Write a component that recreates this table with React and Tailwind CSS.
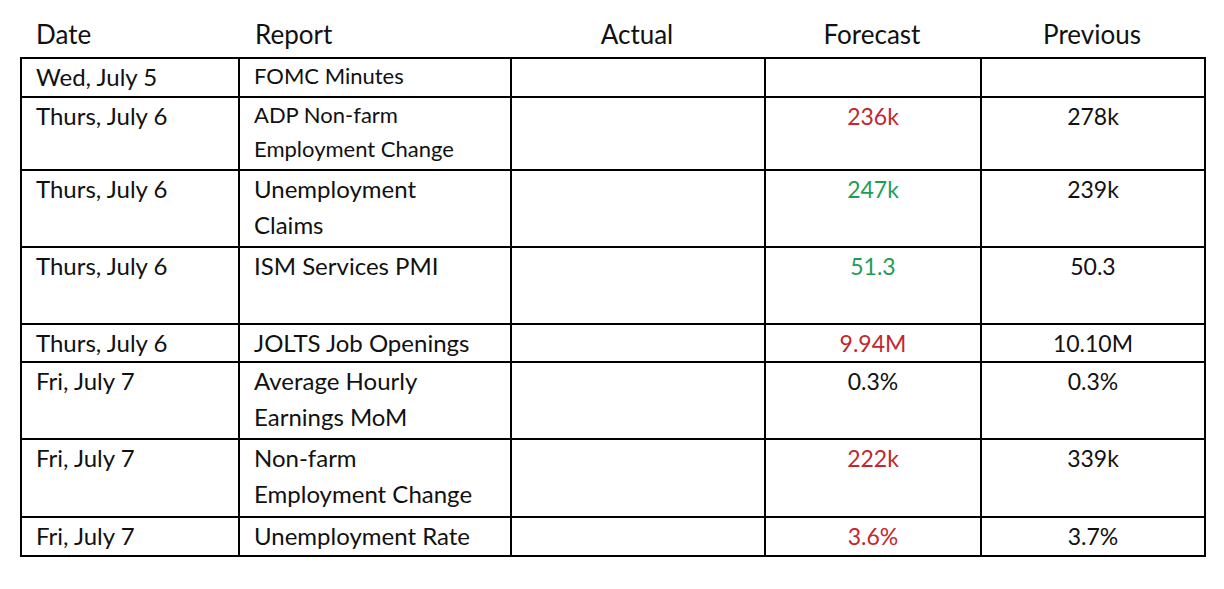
const rows = [
  { date: 'Wed, July 5', report: ['FOMC Minutes'], small: true },
  { date: 'Thurs, July 6', report: ['ADP Non-farm', 'Employment Change'], small: true, forecast: '236k', tone: 'red', previous: '278k' },
  { date: 'Thurs, July 6', report: ['Unemployment', 'Claims'], forecast: '247k', tone: 'green', previous: '239k' },
  { date: 'Thurs, July 6', report: ['ISM Services PMI'], forecast: '51.3', tone: 'green', previous: '50.3' },
  { date: 'Thurs, July 6', report: ['JOLTS Job Openings'], forecast: '9.94M', tone: 'red', previous: '10.10M' },
  { date: 'Fri, July 7', report: ['Average Hourly', 'Earnings MoM'], forecast: '0.3%', previous: '0.3%' },
  { date: 'Fri, July 7', report: ['Non-farm', 'Employment Change'], forecast: '222k', tone: 'red', previous: '339k' },
  { date: 'Fri, July 7', report: ['Unemployment Rate'], forecast: '3.6%', tone: 'red', previous: '3.7%' },
];

const toneClass = {
  red: 'text-[#c3262c]',
  green: 'text-[#1f9d57]',
};

export default function App() {
  return (
    <div
      className="w-[1224px] h-[589px] bg-white text-[#111] overflow-hidden"
      style={{ fontFamily: 'Lato, "Open Sans", sans-serif' }}
    >
      {/* Заголовки колонок */}
      <div className="ml-[22px] h-[57px] pt-[16px] grid grid-cols-[216px_272px_254px_216px_224px] text-[26px] leading-[36px]">
        <div className="pl-[14px]">Date</div>
        <div className="pl-[17px]">Report</div>
        <div className="text-center">Actual</div>
        <div className="text-center">Forecast</div>
        <div className="text-center">Previous</div>
      </div>

      {/* Таблица */}
      <div className="ml-[20px] w-[1186px] border-2 border-black bg-black grid gap-[2px] grid-cols-[216px_270px_252px_214px_222px] grid-rows-[37px_71px_75px_75px_36px_75px_76px_37px]">
        {rows.map((r, i) => (
          <Row key={i} row={r} />
        ))}
      </div>
    </div>
  );
}

function Row({ row }) {
  return (
    <>
      <div className="bg-white pl-[14px] text-[24px] leading-[36px]">{row.date}</div>
      <div
        className={`bg-white pl-[14px] ${
          row.small ? 'text-[22px] leading-[34px]' : 'text-[24px] leading-[36px]'
        }`}
      >
        {row.report.map((line, j) => (
          <div key={j}>{line}</div>
        ))}
      </div>
      <div className="bg-white" />
      <div className={`bg-white text-center text-[23px] leading-[36px] ${toneClass[row.tone] || ''}`}>
        {row.forecast}
      </div>
      <div className="bg-white text-center text-[23px] leading-[36px]">{row.previous}</div>
    </>
  );
}
